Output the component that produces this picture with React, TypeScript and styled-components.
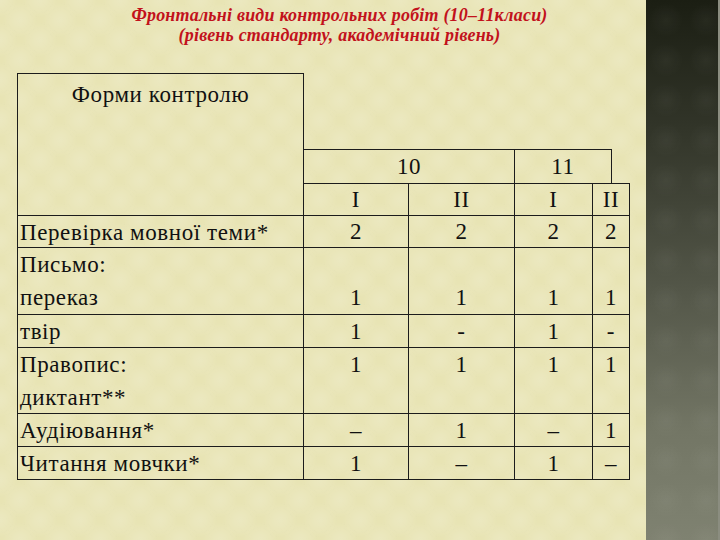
import React from 'react';
import styled, { createGlobalStyle, css } from 'styled-components';

const serif = `'Liberation Serif', 'Times New Roman', serif`;

const GlobalStyle = createGlobalStyle`
  html, body {
    margin: 0;
    padding: 0;
  }
  body {
    width: 720px;
    height: 540px;
    overflow: hidden;
    font-family: ${serif};
  }
`;

const diamonds = css`
  background-image:
    radial-gradient(circle, rgba(255, 255, 255, 0.16) 0, rgba(255, 255, 255, 0.08) 35%, transparent 62%),
    radial-gradient(circle, rgba(255, 255, 255, 0.16) 0, rgba(255, 255, 255, 0.08) 35%, transparent 62%);
  background-size: 40px 40px;
  background-position: 0 0, 20px 20px;
`;

const Page = styled.div`
  display: flex;
  width: 720px;
  height: 540px;
`;

const Slide = styled.main`
  flex: 1;
  padding: 5px 0 0 17px;
  background-color: #e8e4b4;
  ${diamonds}
`;

const Sidebar = styled.aside`
  width: 76px;
  background-color: #4a4d3e;
  background-image:
    radial-gradient(circle, rgba(255, 255, 255, 0.04) 0, transparent 60%),
    linear-gradient(180deg, #1b1e13 0%, #33362a 25%, #55584a 55%, #737665 80%, #7f8271 100%);
  background-size: 40px 40px, 100% 100%;
  border-right: 2px solid #8b8d80;
`;

const Title = styled.h1`
  margin: 0;
  padding-left: 16px;
  width: 613px;
  text-align: center;
  font-family: ${serif};
  font-style: italic;
  font-weight: bold;
  font-size: 18px;
  letter-spacing: 0.2px;
  line-height: 20px;
  color: #c2121c;
`;

const Grid = styled.div`
  display: grid;
  margin-top: 28px;
  grid-template-columns: 287px 105px 106px 78px 19px 18px;
  grid-template-rows: 76px 34px 33px 32px 67px 33px 66px 33px 33px;
  font-family: ${serif};
  font-size: 23px;
  letter-spacing: 0.6px;
  line-height: 33px;
  color: #111;
`;

type CellProps = {
  $col: string;
  $row: string;
  $top?: boolean;
  $left?: boolean;
  $bottom?: boolean;
  $align?: 'start' | 'center' | 'end';
  $label?: boolean;
};

const line = '1px solid #1c1c1c';

const Cell = styled.div<CellProps>`
  box-sizing: border-box;
  grid-column: ${(p) => p.$col};
  grid-row: ${(p) => p.$row};
  display: flex;
  flex-direction: column;
  justify-content: ${(p) => (p.$align === 'end' ? 'flex-end' : p.$align === 'start' ? 'flex-start' : 'center')};
  align-items: ${(p) => (p.$label ? 'flex-start' : 'center')};
  padding-left: ${(p) => (p.$label ? '2px' : '0')};
  border-right: ${line};
  border-top: ${(p) => (p.$top ? line : 'none')};
  border-left: ${(p) => (p.$left ? line : 'none')};
  border-bottom: ${(p) => (p.$bottom === false ? 'none' : line)};
  white-space: nowrap;
`;

const HeadCell = styled(Cell)`
  justify-content: flex-start;
  align-items: center;
  padding-top: 4px;
`;

type Row = {
  label: string[];
  values: string[];
  row: string;
  align?: 'start' | 'center' | 'end';
};

const rows: Row[] = [
  { label: ['Перевірка мовної теми*'], values: ['2', '2', '2', '2'], row: '4' },
  { label: ['Письмо:', 'переказ'], values: ['1', '1', '1', '1'], row: '5', align: 'end' },
  { label: ['твір'], values: ['1', '-', '1', '-'], row: '6' },
  { label: ['Правопис:', 'диктант**'], values: ['1', '1', '1', '1'], row: '7', align: 'start' },
  { label: ['Аудіювання*'], values: ['–', '1', '–', '1'], row: '8' },
  { label: ['Читання мовчки*'], values: ['1', '–', '1', '–'], row: '9' },
];

const valueCols = ['2', '3', '4', '5 / 7'];

const App = () => (
  <Page>
    <GlobalStyle />
    <Slide>
      <Title>
        Фронтальні види контрольних робіт (10–11класи)
        <br />
        (рівень стандарту, академічний рівень)
      </Title>
      <Grid>
        <HeadCell $col='1' $row='1 / 4' $top $left>
          Форми контролю
        </HeadCell>
        <Cell $col='2 / 4' $row='2' $top $bottom={false}>
          10
        </Cell>
        <Cell $col='4 / 6' $row='2' $top $bottom={false}>
          11
        </Cell>
        <Cell $col='2' $row='3' $top>I</Cell>
        <Cell $col='3' $row='3' $top>II</Cell>
        <Cell $col='4' $row='3' $top>I</Cell>
        <Cell $col='5 / 7' $row='3' $top>II</Cell>
        {rows.map((r) => (
          <React.Fragment key={r.row}>
            <Cell $col='1' $row={r.row} $left $label $align='start'>
              {r.label.map((t) => (
                <span key={t}>{t}</span>
              ))}
            </Cell>
            {r.values.map((v, i) => (
              <Cell key={i} $col={valueCols[i]} $row={r.row} $align={r.align}>
                {v}
              </Cell>
            ))}
          </React.Fragment>
        ))}
      </Grid>
    </Slide>
    <Sidebar />
  </Page>
);

export default App;
